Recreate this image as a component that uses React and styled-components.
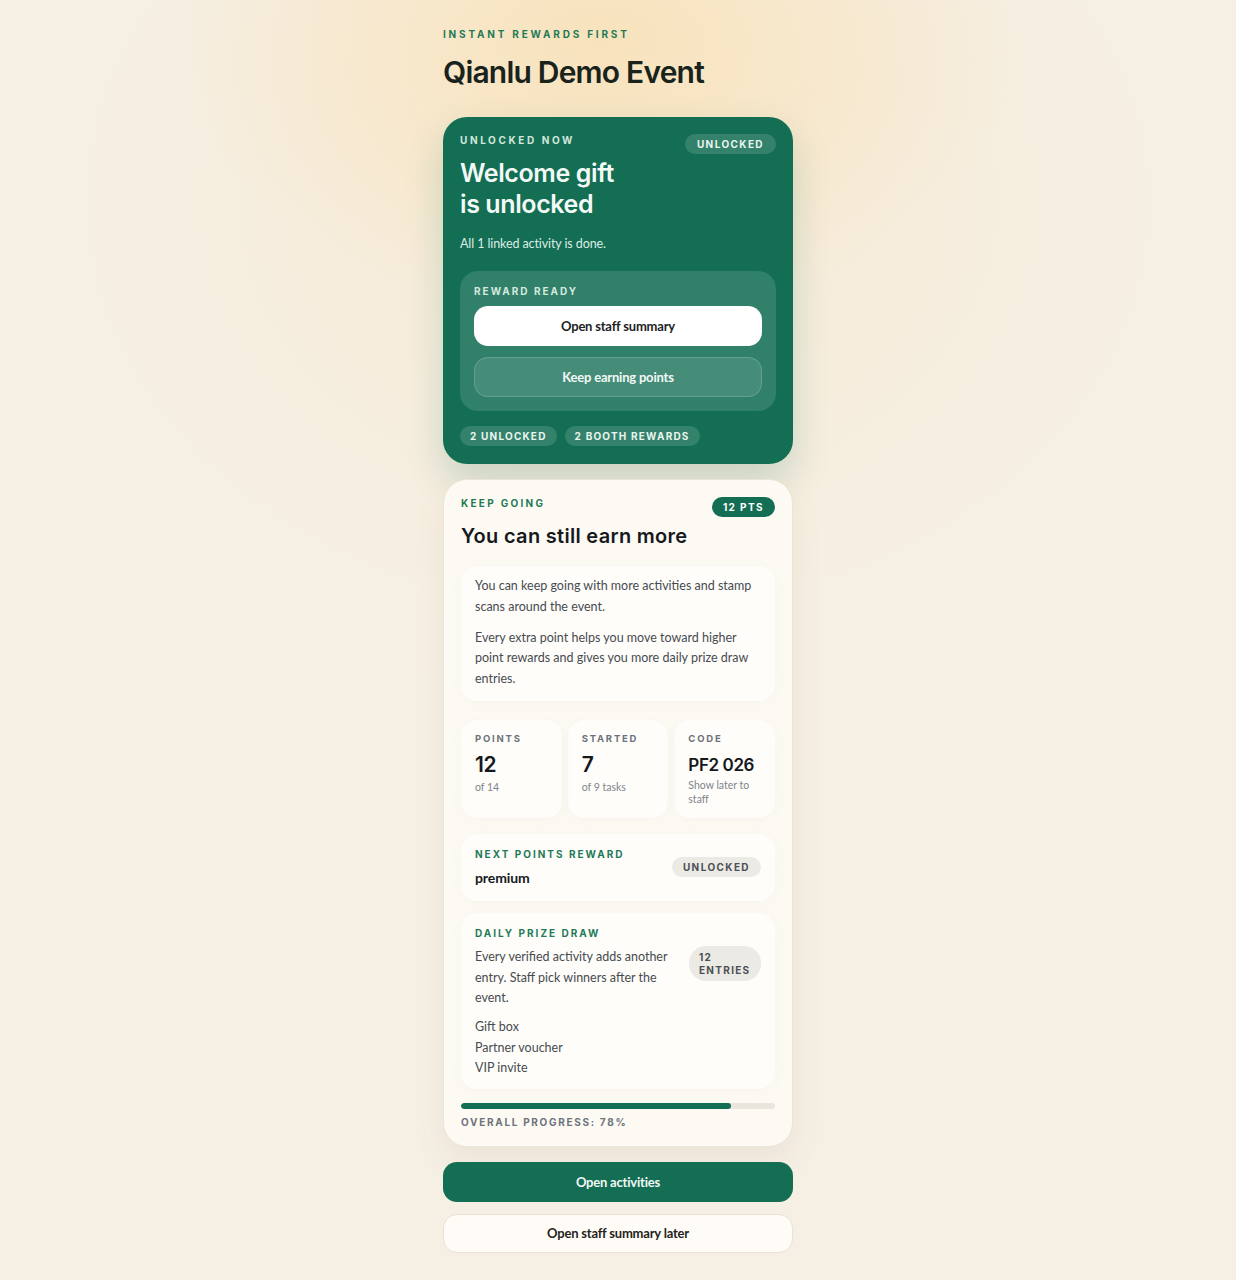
import React from 'react';
import styled, { createGlobalStyle } from 'styled-components';

const GlobalStyle = createGlobalStyle`
  html, body {
    margin: 0;
    padding: 0;
  }
  body {
    min-height: 1280px;
    font-family: Lato, "Open Sans", sans-serif;
    background:
      radial-gradient(ellipse 420px 280px at 600px 40px, rgba(248, 224, 180, 0.8), rgba(248, 226, 184, 0) 100%),
      radial-gradient(ellipse 900px 700px at 618px 200px, #f7ebd6 0%, #f6efe3 60%, #f6efe4 100%);
    background-color: #f5efe4;
  }
`;

const Page = styled.main`
  width: 350px;
  margin: 0 auto;
  padding: 27px 0 28px;
  display: flex;
  flex-direction: column;
`;

const Eyebrow = styled.div`
  font-family: Inter, sans-serif;
  font-size: ${p => p.$size || 10}px;
  line-height: 14px;
  font-weight: 700;
  letter-spacing: ${p => p.$spacing || 2.4}px;
  text-transform: uppercase;
  color: ${p => p.$color || '#1f7a57'};
`;

const Title = styled.h1`
  margin: 13px 0 0;
  font-family: Inter, sans-serif;
  font-size: 30px;
  line-height: 36px;
  font-weight: 600;
  letter-spacing: -0.8px;
  color: #19231b;
`;

const HeroCard = styled.section`
  margin-top: 27px;
  background: #136e54;
  border-radius: 24px;
  padding: 16px 17px 18px;
  box-shadow: 0 18px 38px rgba(19, 110, 84, 0.2);
  color: #eef7f2;
`;

const HeadRow = styled.div`
  display: flex;
  justify-content: space-between;
  align-items: flex-start;
  gap: 12px;
`;

const HeroTitle = styled.h2`
  margin: 11px 0 0;
  font-family: Inter, sans-serif;
  font-size: 25px;
  line-height: 31px;
  font-weight: 600;
  letter-spacing: -0.4px;
  color: #f3faf6;
  max-width: 170px;
`;

const Pill = styled.span`
  display: inline-flex;
  align-items: center;
  flex-shrink: 0;
  height: ${p => p.$h || 20}px;
  padding: 0 ${p => p.$px || 11}px;
  border-radius: 999px;
  font-family: Inter, sans-serif;
  font-size: 10px;
  font-weight: 700;
  letter-spacing: ${p => p.$ls || 1.4}px;
  text-transform: uppercase;
  white-space: nowrap;
  background: ${p => p.$bg || 'rgba(255, 255, 255, 0.14)'};
  color: ${p => p.$color || '#eaf5ef'};
  margin-top: ${p => p.$mt || 0}px;
`;

const HeroText = styled.p`
  margin: 15px 0 0;
  font-size: 12.5px;
  line-height: 18px;
  letter-spacing: -0.1px;
  color: #dcece4;
`;

const ReadyPanel = styled.div`
  margin-top: 18px;
  background: rgba(255, 255, 255, 0.13);
  border-radius: 18px;
  padding: 13px 14px 14px;
  display: flex;
  flex-direction: column;
`;

const Button = styled.button`
  display: flex;
  align-items: center;
  justify-content: center;
  width: 100%;
  height: ${p => p.$h || 40}px;
  border-radius: 14px;
  font-family: Lato, sans-serif;
  font-size: 13px;
  font-weight: 700;
  letter-spacing: -0.2px;
  cursor: pointer;
  border: 1px solid transparent;
  ${p => p.$variant === 'white' && `
    background: #ffffff;
    color: #1d231f;
  `}
  ${p => p.$variant === 'ghost' && `
    background: rgba(255, 255, 255, 0.1);
    border-color: rgba(255, 255, 255, 0.16);
    color: #f1f8f4;
  `}
  ${p => p.$variant === 'primary' && `
    background: #136e54;
    color: #f1f8f4;
  `}
  ${p => p.$variant === 'light' && `
    background: #fffcf7;
    border-color: #e8e1d4;
    color: #1f2420;
  `}
  margin-top: ${p => p.$mt || 0}px;
`;

const ChipRow = styled.div`
  display: flex;
  gap: 8px;
  margin-top: 15px;
`;

const Card = styled.section`
  margin-top: 15px;
  background: #fdfaf4;
  border: 1px solid #ebe4d7;
  border-radius: 24px;
  padding: 16px 17px 17px;
  box-shadow: 0 14px 32px rgba(120, 100, 60, 0.08);
  display: flex;
  flex-direction: column;
`;

const CardTitle = styled.h2`
  margin: 6px 0 0;
  font-family: Inter, sans-serif;
  font-size: 20px;
  line-height: 26px;
  font-weight: 600;
  letter-spacing: 0.3px;
  color: #16191c;
`;

const SoftBox = styled.div`
  background: rgba(255, 255, 255, 0.5);
  border-radius: 16px;
  box-shadow: 0 2px 14px rgba(130, 110, 70, 0.045);
  padding: ${p => p.$pad || '13px 14px'};
  margin-top: ${p => p.$mt || 16}px;
`;

const Para = styled.p`
  margin: 0;
  font-size: 12.5px;
  line-height: 20.75px;
  letter-spacing: 0;
  color: #474b50;
  & + & {
    margin-top: 10px;
  }
`;

const StatGrid = styled.div`
  margin-top: 19px;
  display: grid;
  grid-template-columns: repeat(3, 1fr);
  gap: 6px;
`;

const Stat = styled.div`
  background: rgba(255, 255, 255, 0.5);
  border-radius: 16px;
  box-shadow: 0 2px 14px rgba(130, 110, 70, 0.045);
  padding: 12px 12px 12px 14px;
  min-height: 72px;
`;

const StatValue = styled.div`
  margin-top: ${p => p.$mt || 7}px;
  font-family: Inter, sans-serif;
  font-size: ${p => p.$size || 21}px;
  line-height: 24px;
  font-weight: 600;
  letter-spacing: -0.4px;
  color: #15181b;
`;

const StatSub = styled.div`
  margin-top: ${p => p.$mt || 4}px;
  font-size: 10.5px;
  line-height: 14px;
  color: #80848a;
`;

const SplitRow = styled.div`
  display: flex;
  justify-content: space-between;
  align-items: flex-start;
  gap: 16px;
`;

const Strong = styled.div`
  margin-top: 8px;
  font-size: 14px;
  line-height: 18px;
  font-weight: 700;
  letter-spacing: -0.1px;
  color: #16191c;
`;

const EntriesPill = styled.span`
  flex-shrink: 0;
  padding: 5px 10px 4px;
  border-radius: 17px;
  background: #eceae4;
  font-family: Inter, sans-serif;
  font-size: 10px;
  line-height: 13px;
  font-weight: 700;
  letter-spacing: 1.3px;
  color: #4b4f55;
  text-transform: uppercase;
  width: 52px;
  margin-top: 6px;
`;

const List = styled.ul`
  list-style: none;
  margin: 8px 0 0;
  padding: 0;
  font-size: 12.5px;
  line-height: 20.5px;
  color: #474b50;
`;

const Track = styled.div`
  margin-top: 14px;
  height: 6px;
  border-radius: 6px;
  background: #eae6de;
  overflow: hidden;
`;

const Fill = styled.div`
  height: 100%;
  border-radius: 6px;
  background: #136e54;
`;

const Actions = styled.div`
  margin-top: 15px;
  display: flex;
  flex-direction: column;
  gap: 12px;
`;

const stats = [
  { label: 'Points', value: '12', sub: 'of 14' },
  { label: 'Started', value: '7', sub: 'of 9 tasks' },
  { label: 'Code', value: 'PF2 026', sub: 'Show later to staff', small: true },
];

const App = () => {
  const progress = 86;

  return (
    <>
      <GlobalStyle />
      <Page>
        <Eyebrow $spacing={2.8}>Instant rewards first</Eyebrow>
        <Title>Qianlu Demo Event</Title>

        <HeroCard>
          <HeadRow>
            <div>
              <Eyebrow $color="#d3e7dd" $spacing={2.6}>Unlocked now</Eyebrow>
              <HeroTitle>Welcome gift is unlocked</HeroTitle>
            </div>
            <Pill $mt={1} $px={12}>Unlocked</Pill>
          </HeadRow>
          <HeroText>All 1 linked activity is done.</HeroText>

          <ReadyPanel>
            <Eyebrow $color="#d6e9df" $spacing={2}>Reward ready</Eyebrow>
            <Button $variant="white" $mt={8}>Open staff summary</Button>
            <Button $variant="ghost" $mt={11}>Keep earning points</Button>
          </ReadyPanel>

          <ChipRow>
            <Pill $px={10} $ls={1.2}>2 unlocked</Pill>
            <Pill $px={10} $ls={1.2}>2 booth rewards</Pill>
          </ChipRow>
        </HeroCard>

        <Card>
          <HeadRow>
            <Eyebrow $spacing={2.3}>Keep going</Eyebrow>
            <Pill $bg="#136e54" $color="#ffffff" $mt={1}>12 pts</Pill>
          </HeadRow>
          <CardTitle>You can still earn more</CardTitle>

          <SoftBox $mt={17} $pad="10px 14px 11px">
            <Para>You can keep going with more activities and stamp scans around the event.</Para>
            <Para>Every extra point helps you move toward higher point rewards and gives you more daily prize draw entries.</Para>
          </SoftBox>

          <StatGrid>
            {stats.map(s => (
              <Stat key={s.label}>
                <Eyebrow $color="#6d727b" $spacing={1.8} $size={9.5}>{s.label}</Eyebrow>
                <StatValue $size={s.small ? 17 : 21} $mt={s.small ? 7 : 7}>{s.value}</StatValue>
                <StatSub $mt={s.small ? 1 : 3}>{s.sub}</StatSub>
              </Stat>
            ))}
          </StatGrid>

          <SoftBox $mt={16} $pad="13px 14px 14px">
            <SplitRow>
              <div>
                <Eyebrow $spacing={2}>Next points reward</Eyebrow>
                <Strong>premium</Strong>
              </div>
              <Pill $bg="#eceae4" $color="#4b4f55" $mt={10}>Unlocked</Pill>
            </SplitRow>
          </SoftBox>

          <SoftBox $mt={12} $pad="13px 14px 10px">
            <Eyebrow $spacing={2}>Daily prize draw</Eyebrow>
            <SplitRow>
              <Para style={{ marginTop: 7 }}>Every verified activity adds another entry. Staff pick winners after the event.</Para>
              <EntriesPill>12 entries</EntriesPill>
            </SplitRow>
            <List>
              <li>Gift box</li>
              <li>Partner voucher</li>
              <li>VIP invite</li>
            </List>
          </SoftBox>

          <Track>
            <Fill style={{ width: `${progress}%` }} />
          </Track>
          <Eyebrow $color="#6d727b" $spacing={1.7} style={{ marginTop: 6 }}>Overall progress: 78%</Eyebrow>
        </Card>

        <Actions>
          <Button $variant="primary">Open activities</Button>
          <Button $variant="light" $h={39}>Open staff summary later</Button>
        </Actions>
      </Page>
    </>
  );
};

export default App;
